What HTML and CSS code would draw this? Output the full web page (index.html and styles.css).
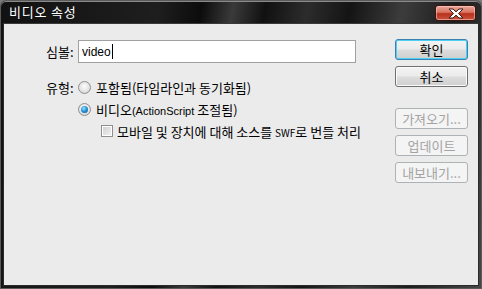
FILE: index.html
```html
<!DOCTYPE html>
<html>
<head>
  <title>비디오 속성</title>
  <link rel="stylesheet" href="styles.css">
</head>
<body>
  <div class="window">
    <div class="titlebar">
      <span class="title">비디오 속성</span>
      <span class="close">
        <svg width="18" height="11" viewBox="0 0 18 11">
          <path d="M2 1 L6 1 L9 3.8 L12 1 L16 1 L11.5 5.5 L16 10 L12 10 L9 7.2 L6 10 L2 10 L6.5 5.5 Z" fill="#fff" stroke="#3a1a14" stroke-width="1" stroke-linejoin="round"/>
        </svg>
      </span>
    </div>
    <div class="panel">
      <div class="form">
        <div class="row symbol-row">
          <span class="label">심볼:</span>
          <div class="textbox">video<span class="caret"></span></div>
        </div>
        <div class="row type-row">
          <span class="label">유형:</span>
          <span class="radio"></span>
          <span>포함됨(타임라인과 동기화됨)</span>
        </div>
        <div class="row indent-1">
          <span class="radio checked"></span>
          <span>비디오<span class="latin">(ActionScript </span>조절됨)</span>
        </div>
        <div class="row indent-2">
          <span class="check"></span>
          <span>모바일 및 장치에 대해 소스를 <span class="small">SWF</span>로 번들 처리</span>
        </div>
      </div>
      <div class="buttons">
        <div class="btn default">확인</div>
        <div class="btn">취소</div>
        <div class="btn disabled first-disabled">가져오기...</div>
        <div class="btn disabled">업데이트</div>
        <div class="btn disabled">내보내기...</div>
      </div>
    </div>
  </div>
</body>
</html>
```

FILE: styles.css
```css
body {
  margin: 0;
  padding: 0;
  background-color: #7a7a7a;
  font-family: "Noto Sans CJK KR", "Noto Sans", sans-serif;
  font-size: 13px;
  color: #000;
}
.window {
  width: 482px;
  height: 289px;
  box-sizing: border-box;
  display: flex;
  flex-direction: column;
  border: 1px solid #5a5a5a;
  border-radius: 6px 6px 0 0;
  padding: 0 2px 2px 2px;
  background: linear-gradient(100deg, #111 0%, #1e1e1e 30%, #0c0c0c 38%, #3a3a3a 44%, #111 50%, #2c2c2c 58%, #141414 66%, #3c3c3c 76%, #1c1c1c 86%, #474747 100%);
  box-shadow: inset 0 1px 0 #8a8a8a;
}
.titlebar {
  height: 22px;
  display: flex;
  align-items: flex-start;
  justify-content: space-between;
  padding: 0 3px 0 6px;
}
.title {
  color: #fff;
  font-size: 13px;
  line-height: 22px;
  letter-spacing: 0.8px;
}
.close {
  margin-top: 4px;
  width: 41px;
  height: 16px;
  box-sizing: border-box;
  border: 1px solid #3b1410;
  border-radius: 3px;
  background: linear-gradient(#e9a89b 0%, #d9725f 45%, #b8301c 55%, #c9553f 100%);
  display: flex;
  align-items: center;
  justify-content: center;
  box-shadow: inset 0 0 0 1px rgba(255, 220, 210, 0.5);
}
.panel {
  flex: 1;
  display: flex;
  background-color: #ebebeb;
  border: 1px solid #2a2a2a;
  border-top-color: #3a3a3a;
}
.form {
  width: 311px;
  padding: 16px 0 0 42px;
}
.row {
  display: flex;
  align-items: center;
  height: 16px;
  white-space: nowrap;
}
.symbol-row {
  height: 23px;
}
.type-row {
  margin-top: 16px;
}
.indent-1 {
  margin-top: 6px;
  padding-left: 32px;
}
.indent-2 {
  margin-top: 6px;
  padding-left: 55px;
}
.label {
  width: 32px;
  flex-shrink: 0;
}
.textbox {
  width: 278px;
  height: 23px;
  box-sizing: border-box;
  border: 1px solid #a0a0a0;
  background-color: #fff;
  padding: 0 3px;
  display: flex;
  align-items: center;
  font-family: "Liberation Sans", sans-serif;
  font-size: 12px;
}
.caret {
  display: inline-block;
  width: 1px;
  height: 15px;
  background-color: #000;
  margin-left: 1px;
}
.latin {
  font-family: "Liberation Sans", sans-serif;
  font-size: 11px;
}
.small {
  font-size: 10px;
}
.radio {
  width: 13px;
  height: 13px;
  box-sizing: border-box;
  border-radius: 50%;
  border: 1px solid #8f8f8f;
  background: radial-gradient(circle at 50% 40%, #fdfdfd 0%, #e4e4e4 55%, #c8c8c8 100%);
  margin-right: 5px;
  flex-shrink: 0;
  position: relative;
}
.radio.checked::after {
  content: "";
  position: absolute;
  left: 2px;
  top: 2px;
  width: 7px;
  height: 7px;
  border-radius: 50%;
  background: radial-gradient(circle at 40% 35%, #9be0ff 0%, #1f8fd6 50%, #0a4f8a 100%);
}
.check {
  width: 12px;
  height: 12px;
  box-sizing: border-box;
  border: 1px solid #8f8f8f;
  background: linear-gradient(135deg, #cfcfcf 0%, #f2f2f2 100%);
  box-shadow: inset 0 0 0 1px #fff;
  margin-right: 4px;
  flex-shrink: 0;
}
.buttons {
  display: flex;
  flex-direction: column;
  gap: 6px;
  padding: 15px 0 0 38px;
}
.btn {
  width: 73px;
  height: 21px;
  box-sizing: border-box;
  border: 1px solid #707070;
  border-radius: 3px;
  background: linear-gradient(#f3f3f3 0%, #ebebeb 48%, #dddddd 52%, #cfcfcf 100%);
  box-shadow: inset 0 0 0 1px #fbfbfb;
  display: flex;
  align-items: center;
  justify-content: center;
  font-size: 13px;
}
.btn.default {
  border-color: #3c7fb1;
  box-shadow: inset 0 0 0 1px #4ad0f5;
}
.btn.disabled {
  border-color: #adb2b5;
  background: #f4f4f4;
  box-shadow: none;
  color: #a3a3a3;
}
.btn.first-disabled {
  margin-top: 15px;
}
```
